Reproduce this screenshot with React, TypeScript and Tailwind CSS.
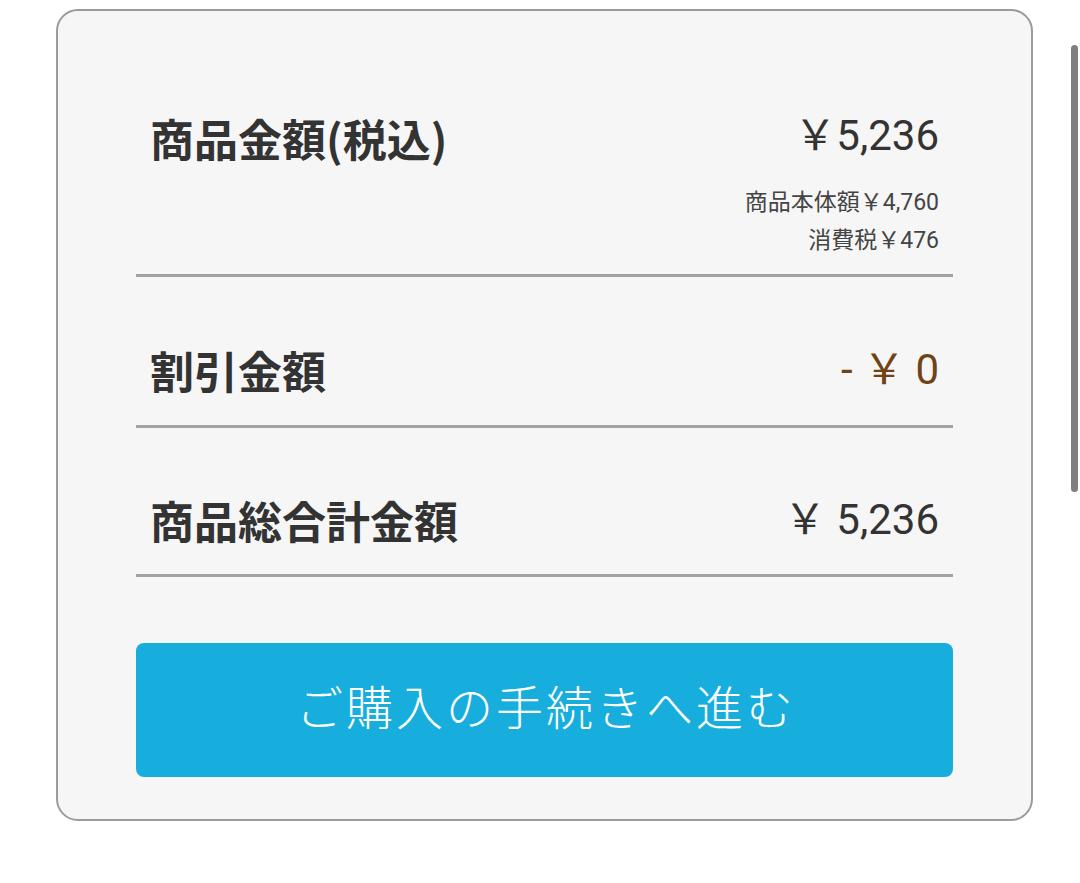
import React from "react";

const font = {
  fontFamily: 'Roboto, "Noto Sans CJK JP", sans-serif',
};

export default function App() {
  return (
    <div
      className="relative w-[1080px] h-[883px] bg-white overflow-hidden pt-[9px] pl-[56px]"
      style={font}
    >
      <div className="w-[977px] h-[812px] rounded-[22px] border-2 border-[#9b9b9b] bg-[#f6f6f6] px-[78px]">
        {/* Row 1 */}
        <div className="flex justify-between pt-[101px] pb-[14px] px-[14px]">
          <div
            className="text-[44px] leading-[56px] font-bold text-[#333333] -mt-[2px]"
            style={{ fontFamily: '"Noto Sans CJK JP", sans-serif' }}
          >
            商品金額(税込)
          </div>
          <div className="flex flex-col items-end">
            <div className="text-[42px] leading-[52px] text-[#333333] -mt-[2px]">
              ￥5,236
            </div>
            <div className="mt-[22px] text-[23px] leading-[38px] text-[#444444]">
              商品本体額￥4,760
            </div>
            <div className="text-[23px] leading-[38px] text-[#444444]">
              消費税￥476
            </div>
          </div>
        </div>
        <div className="h-[3px] bg-[#a2a2a2]" />

        {/* Row 2 */}
        <div className="flex justify-between items-center h-[148px] pt-[38px] px-[14px]">
          <div
            className="text-[44px] leading-[56px] font-bold text-[#333333]"
            style={{ fontFamily: '"Noto Sans CJK JP", sans-serif' }}
          >
            割引金額
          </div>
          <div className="text-[42px] leading-[56px] text-[#6f4315]">
            - ￥ 0
          </div>
        </div>
        <div className="h-[3px] bg-[#a2a2a2]" />

        {/* Row 3 */}
        <div className="flex justify-between items-center h-[146px] pt-[38px] px-[14px]">
          <div
            className="text-[44px] leading-[56px] font-bold text-[#333333]"
            style={{ fontFamily: '"Noto Sans CJK JP", sans-serif' }}
          >
            商品総合計金額
          </div>
          <div className="text-[42px] leading-[56px] text-[#333333]">
            ￥ 5,236
          </div>
        </div>
        <div className="h-[3px] bg-[#a2a2a2]" />

        {/* Button */}
        <div className="mt-[66px] h-[134px] rounded-[8px] bg-[#17aede] flex items-center justify-center">
          <span
            className="text-[47px] leading-[56px] tracking-[3px] pl-[3px] text-white font-light -mt-[11px]"
            style={{ fontFamily: '"Noto Sans CJK JP", sans-serif' }}
          >
            ご購入の手続きへ進む
          </span>
        </div>
      </div>

      {/* scrollbar overlay */}
      <div className="absolute left-[1071px] top-[45px] w-[7px] h-[447px] rounded-full bg-[#7f7f7f]" />
    </div>
  );
}
